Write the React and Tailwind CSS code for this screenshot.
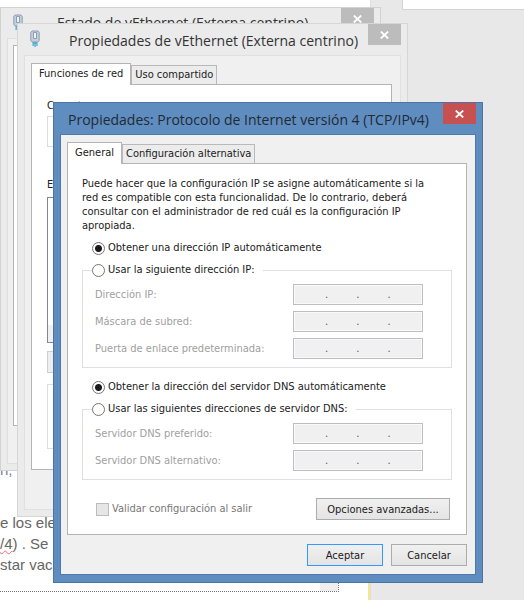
import { useState } from 'react'
import clsx from 'clsx'

const TITLE_FONT = "font-['Open_Sans','Noto_Sans',sans-serif]"
const UI_FONT = "font-['DejaVu_Sans_Condensed','Noto_Sans',sans-serif]"

function NetworkIcon({ className }) {
  return (
    <svg className={clsx('block h-[18px] w-[10px] shrink-0', className)} viewBox="0 0 10 18" aria-hidden="true">
      <path d="M2 1h6l1.200 1.500v8L8 12H2L.8 10.500v-8z" fill="#c3cfdc" stroke="#8fa0b6" />
      <path d="M3.500 2.500h3v6h-3z" fill="#eef3f8" stroke="#7e8da3" strokeWidth=".8" />
      <path d="M2.500 12h5v2h-5z" fill="#6fa3c4" />
      <path d="M2.500 14h1.300v2H2.500zM4.400 14h1.300v3H4.400zM6.300 14h1.300v2H6.300z" fill="#2fb4e4" />
    </svg>
  )
}

function CloseButton({ active }) {
  return (
    <button
      type="button"
      aria-label="Cerrar"
      className={clsx('flex h-[21px] w-[33px] shrink-0 items-center justify-center', active ? 'bg-[#c75050]' : 'bg-[#bcbcbc]')}
    >
      <svg className="h-2 w-[9px]" viewBox="0 0 9 8" aria-hidden="true">
        <path d="M.8.500 8.200 7.500M8.200.500.8 7.500" stroke="#fff" strokeWidth="1.800" fill="none" />
      </svg>
    </button>
  )
}

function Tab({ selected, children }) {
  return (
    <button
      type="button"
      role="tab"
      aria-selected={selected}
      className={clsx(
        'border border-b-0 whitespace-nowrap',
        selected ? 'relative z-10 -mb-px h-[22px] border-[#b4b4b4] bg-white px-[7px] pb-[2px]' : 'h-[19px] border-[#b9b9b9] bg-[#ececec] px-[3px]'
      )}
    >
      {children}
    </button>
  )
}

// Address box: four octets split by dots
function AddressField({ id, label }) {
  return (
    <div className="flex items-center justify-between">
      <label htmlFor={id} className="text-[#a0a0a0]">{label}</label>
      <div className="flex h-[21px] w-[130px] items-center border border-[#bdbdc4] bg-[#f0f0f0] pt-px pl-[3px] text-[#555] shadow-[inset_0_0_0_1px_#f9f9f9]">
        {[0, 1, 2, 3].map(n => (
          <div key={n} className="flex min-w-0 flex-1 items-center">
            <input
              id={n === 0 ? id : undefined}
              aria-label={n === 0 ? undefined : `${label} ${n + 1}`}
              disabled
              className="w-full min-w-0 bg-transparent text-center"
            />
            {n < 3 && <span>.</span>}
          </div>
        ))}
      </div>
    </div>
  )
}

function Radio({ name, checked, onChange, children }) {
  return (
    <label className="flex items-center gap-[3px] whitespace-nowrap">
      <input
        type="radio"
        name={name}
        checked={checked}
        onChange={onChange}
        className="size-[13px] shrink-0 appearance-none rounded-full border border-[#777] bg-white checked:bg-[radial-gradient(circle,#1a1a1a_3px,#fff_4px)]"
      />
      {children}
    </label>
  )
}

function Document() {
  return (
    <div className="absolute inset-y-0 right-[153px] left-0 overflow-hidden border-r border-[#dedede] bg-white font-['Liberation_Sans',Arial,sans-serif] text-[15px] leading-[21px] whitespace-nowrap text-[#666]">
      <div className="mt-[459px] text-[#7d7d95]">n, se</div>
      <div className="mt-8">e los elementos</div>
      <div>
        <span className="underline decoration-red-400 decoration-wavy decoration-1 underline-offset-1">/4</span>) . Se ha
      </div>
      <div>star vacía</div>
      <div className="mr-[31px] flex h-[17px] justify-end border-r border-b border-dotted border-[#777]">
        <div className="w-[18px] bg-[#eee]" />
      </div>
      <div className="absolute right-0 bottom-0 h-20 w-[2px] bg-[#f5e68f]" />
    </div>
  )
}

function StatusWindow() {
  return (
    <div className="absolute top-[7px] right-[143px] left-0 border border-[#d2d2d2] bg-[#ebebeb] px-[6px] pb-[6px]">
      <div className="flex h-[30px] items-start">
        <NetworkIcon className="mt-[6px] ml-[6px]" />
        <h2 className={clsx('min-w-0 flex-1 pt-[5px] pl-[34px] text-[14px] leading-5 whitespace-nowrap text-[#333]', TITLE_FONT)}>
          Estado de vEthernet (Externa centrino)
        </h2>
        <CloseButton />
      </div>
      <div className="border border-[#dedede] bg-[#f0f0f0] px-[5px] pt-[6px] pb-[37px]">
        <div className="h-[381px] border border-[#b4b4b4] bg-white" />
      </div>
    </div>
  )
}

function AdapterWindow() {
  return (
    <div className="absolute top-[23px] right-[116px] left-[17px] border border-[#d6d6d6] bg-[#ebebeb] px-[6px] pb-[6px]">
      <div className="flex h-[31px] items-start">
        <NetworkIcon className="mt-[6px] ml-[6px]" />
        <h2 className={clsx('min-w-0 flex-1 pt-[7px] pl-[29px] text-[14px] leading-5 whitespace-nowrap text-[#333]', TITLE_FONT)}>
          Propiedades de vEthernet (Externa centrino)
        </h2>
        <CloseButton />
      </div>
      <div className={clsx('border border-[#e0e0e0] bg-[#f0f0f0] pt-[7px] pr-2 pb-[39px] pl-[6px] text-[11px] leading-[14px] text-[#222]', UI_FONT)}>
        <div role="tablist" className="flex items-end">
          <Tab selected>Funciones de red</Tab>
          <Tab>Uso compartido</Tab>
        </div>
        <div className="border border-[#b4b4b4] bg-white px-[15px] pt-[14px] pb-5">
          <div>Conectar</div>
          <div className="mt-[3px] h-[31px] border border-[#dcdcdc]" />
          <div className="mt-[31px]">Esta</div>
          <div className="mt-[5px] flex h-[146px] items-end border border-[#828790]">
            <div className="h-[17px] w-full bg-[#f0f0f0]" />
          </div>
          <div className="mt-2 h-[22px] w-[100px] border border-[#d0d0d0] bg-[#eee]" />
          <div className="mt-[11px] h-[65px] border border-[#dcdcdc]" />
        </div>
      </div>
    </div>
  )
}

const BUTTON = 'border bg-linear-to-b from-[#f0f0f0] to-[#e4e4e4] h-[22px] pt-px text-center'

function ProtocolWindow() {
  const [ip, setIp] = useState('auto')
  const [dns, setDns] = useState('auto')

  return (
    <div className="relative mt-[102px] mr-[41px] ml-[53px] border border-[#4a74a8] bg-[#5f8dbf] px-[6px] pb-[7px]">
      <div className="flex h-[31px] items-start">
        <h1 className={clsx('min-w-0 flex-1 pt-[7px] pl-2 text-[14px] leading-5 whitespace-nowrap text-[#1f2a36]', TITLE_FONT)}>
          Propiedades: Protocolo de Internet versión 4 (TCP/IPv4)
        </h1>
        <CloseButton active />
      </div>
      <div className={clsx('border border-[#4f79ab] bg-[#f0f0f0] pt-[7px] pr-2 pb-2 pl-[6px] text-[11px] leading-[14px] text-[#1a1a1a]', UI_FONT)}>
        <div role="tablist" className="flex items-end">
          <Tab selected>General</Tab>
          <Tab>Configuración alternativa</Tab>
        </div>
        <div className="border border-[#b4b4b4] bg-white px-[14px] pt-[13px] pb-[14px]">
          <p className="max-w-[350px]">
            Puede hacer que la configuración IP se asigne automáticamente si la red es compatible con esta
            funcionalidad. De lo contrario, deberá consultar con el administrador de red cuál es la configuración IP
            apropiada.
          </p>

          <div className="mt-2 ml-[10px]">
            <Radio name="ip" checked={ip === 'auto'} onChange={() => setIp('auto')}>
              Obtener una dirección IP automáticamente
            </Radio>
          </div>
          <fieldset className="mt-2 border border-[#dfdfdf] pr-7 pb-2 pl-3">
            <legend className="-ml-[3px] pr-2">
              <Radio name="ip" checked={ip === 'manual'} onChange={() => setIp('manual')}>
                Usar la siguiente dirección IP:
              </Radio>
            </legend>
            <div className="mt-[7px] flex flex-col gap-[6px]">
              <AddressField id="ip-address" label="Dirección IP:" />
              <AddressField id="subnet" label="Máscara de subred:" />
              <AddressField id="gateway" label="Puerta de enlace predeterminada:" />
            </div>
          </fieldset>

          <div className="mt-3 ml-[10px]">
            <Radio name="dns" checked={dns === 'auto'} onChange={() => setDns('auto')}>
              Obtener la dirección del servidor DNS automáticamente
            </Radio>
          </div>
          <fieldset className="mt-2 border border-[#dfdfdf] pr-7 pb-2 pl-3">
            <legend className="-ml-[3px] pr-2">
              <Radio name="dns" checked={dns === 'manual'} onChange={() => setDns('manual')}>
                Usar las siguientes direcciones de servidor DNS:
              </Radio>
            </legend>
            <div className="mt-[7px] flex flex-col gap-[6px]">
              <AddressField id="dns-1" label="Servidor DNS preferido:" />
              <AddressField id="dns-2" label="Servidor DNS alternativo:" />
            </div>
          </fieldset>

          <div className="mt-[18px] flex items-center justify-between pr-[2px] pl-[14px]">
            <label className="flex items-center gap-[3px] text-[#777]">
              <input type="checkbox" disabled className="size-[13px] appearance-none border border-[#bcbcbc] bg-[#e6e6e6]" />
              Validar configuración al salir
            </label>
            <button type="button" className={clsx(BUTTON, 'w-[134px] border-[#acacac]')}>Opciones avanzadas...</button>
          </div>
        </div>
        <div className="mt-[9px] flex justify-end gap-2">
          <button type="button" className={clsx(BUTTON, 'w-[76px] border-[#3399ff]')}>Aceptar</button>
          <button type="button" className={clsx(BUTTON, 'w-[76px] border-[#acacac]')}>Cancelar</button>
        </div>
      </div>
    </div>
  )
}

export default function App() {
  return (
    <div className="relative flow-root min-h-screen overflow-hidden bg-[#e8e8e8]">
      <Document />
      <div className="absolute top-0 right-0 h-[10px] w-[122px] border-b border-l border-[#d4d4d4] bg-white" />
      <StatusWindow />
      <AdapterWindow />
      <ProtocolWindow />
    </div>
  )
}
